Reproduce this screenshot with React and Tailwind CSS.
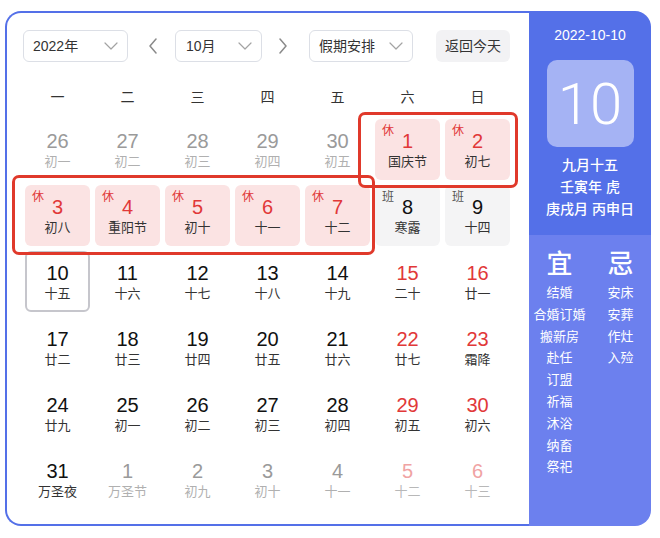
import React from "react";

const ChevDown = () => (
  <svg width="14" height="8" viewBox="0 0 14 8" fill="none" stroke="#a3a3a3" strokeWidth="1.2" strokeLinecap="round" strokeLinejoin="round">
    <polyline points="1,1 7,7 13,1" />
  </svg>
);
const ChevLeft = () => (
  <svg width="10" height="16" viewBox="0 0 10 16" fill="none" stroke="#8a8a8a" strokeWidth="1.5" strokeLinecap="round" strokeLinejoin="round">
    <polyline points="8,1 2,8 8,15" />
  </svg>
);
const ChevRight = () => (
  <svg width="10" height="16" viewBox="0 0 10 16" fill="none" stroke="#8a8a8a" strokeWidth="1.5" strokeLinecap="round" strokeLinejoin="round">
    <polyline points="2,1 8,8 2,15" />
  </svg>
);

// type: o = other month, ow = other month weekend, n = normal, w = weekend red, x = holiday (休), b = 班, t = today
const rows = [
  [["26", "初一", "o"], ["27", "初二", "o"], ["28", "初三", "o"], ["29", "初四", "o"], ["30", "初五", "o"], ["1", "国庆节", "x"], ["2", "初七", "x"]],
  [["3", "初八", "x"], ["4", "重阳节", "x"], ["5", "初十", "x"], ["6", "十一", "x"], ["7", "十二", "x"], ["8", "寒露", "b"], ["9", "十四", "b"]],
  [["10", "十五", "t"], ["11", "十六", "n"], ["12", "十七", "n"], ["13", "十八", "n"], ["14", "十九", "n"], ["15", "二十", "w"], ["16", "廿一", "w"]],
  [["17", "廿二", "n"], ["18", "廿三", "n"], ["19", "廿四", "n"], ["20", "廿五", "n"], ["21", "廿六", "n"], ["22", "廿七", "w"], ["23", "霜降", "w"]],
  [["24", "廿九", "n"], ["25", "初一", "n"], ["26", "初二", "n"], ["27", "初三", "n"], ["28", "初四", "n"], ["29", "初五", "w"], ["30", "初六", "w"]],
  [["31", "万圣夜", "n"], ["1", "万圣节", "o"], ["2", "初九", "o"], ["3", "初十", "o"], ["4", "十一", "o"], ["5", "十二", "ow"], ["6", "十三", "ow"]],
];

function Cell({ num, lunar, type }) {
  let box = "bg-white";
  let numC = "text-[#111]";
  let lunC = "text-[#333]";
  if (type === "o") { numC = "text-[#9a9a9a]"; lunC = "text-[#b0b0b0]"; }
  if (type === "ow") { numC = "text-[#f0a3a3]"; lunC = "text-[#b8b8b8]"; }
  if (type === "w") { numC = "text-[#e13838]"; }
  if (type === "x") { box = "bg-[#fbe3e3]"; numC = "text-[#e13838]"; }
  if (type === "b") { box = "bg-[#f4f4f5]"; }
  if (type === "t") { box = "bg-white border-2 border-[#c6c6cc]"; }
  return (
    <div className={`relative h-[61px] rounded-[6px] flex flex-col items-center ${type === "t" ? "pt-[8px]" : "pt-[10px]"} ${box}`}>
      {type === "x" && (
        <span className="absolute left-[7px] top-[3px] text-[12px] leading-[18px] text-[#e13838]">休</span>
      )}
      {type === "b" && (
        <span className="absolute left-[7px] top-[3px] text-[12px] leading-[18px] text-[#555]">班</span>
      )}
      <span className={`text-[20px] leading-[24px] ${numC}`}>{num}</span>
      <span className={`text-[13px] leading-[18px] ${lunC}`}>{lunar}</span>
    </div>
  );
}

function Select({ w, label, pl }) {
  return (
    <div className={`h-[32px] ${w} border border-[#dcdfe6] rounded-[6px] flex items-center justify-between ${pl} pr-[9px] bg-white`}>
      <span className="text-[14px] text-[#333]">{label}</span>
      <ChevDown />
    </div>
  );
}

export default function App() {
  const yi = ["结婚", "合婚订婚", "搬新房", "赴任", "订盟", "祈福", "沐浴", "纳畜", "祭祀"];
  const ji = ["安床", "安葬", "作灶", "入殓"];
  return (
    <div className="w-[660px] h-[538px] bg-white pt-[11px] pl-[5px] font-['Liberation_Sans','Noto_Sans_CJK_SC',sans-serif]">
      <div className="flex w-[646px] h-[515px]">
        {/* left */}
        <div className="w-[524px] h-full border-l-2 border-t-2 border-b-2 border-[#5470e8] rounded-l-[16px] pl-[16px] pt-[17px] bg-white">
          <div className="flex items-center">
            <Select w="w-[105px]" label="2022年" pl="pl-[9px]" />
            <div className="ml-[13px] w-[24px] flex justify-center"><ChevLeft /></div>
            <div className="ml-[10px]"><Select w="w-[87px]" label="10月" pl="pl-[10px]" /></div>
            <div className="ml-[9px] w-[24px] flex justify-center"><ChevRight /></div>
            <div className="ml-[14px]"><Select w="w-[104px]" label="假期安排" pl="pl-[9px]" /></div>
            <div className="ml-[23px] w-[74px] h-[32px] rounded-[6px] bg-[#f2f2f4] flex items-center justify-center text-[14px] text-[#333]">返回今天</div>
          </div>
          <div className="ml-[2px] mt-[15px] grid grid-cols-[repeat(7,65px)] gap-x-[5px] h-[40px] items-center">
            {["一", "二", "三", "四", "五", "六", "日"].map((d) => (
              <div key={d} className="text-center text-[14px] text-[#333]">{d}</div>
            ))}
          </div>
          <div className="relative ml-[2px] mt-[2px] grid grid-cols-[repeat(7,65px)] gap-x-[5px] gap-y-[5px]">
            {rows.flat().map((c, i) => (
              <Cell key={i} num={c[0]} lunar={c[1]} type={c[2]} />
            ))}
            <div className="absolute left-[333px] top-[-7px] w-[160px] h-[76px] border-[3px] border-[#e0392b] rounded-[7px]" />
            <div className="absolute left-[-13px] top-[56px] w-[363px] h-[80px] border-[3px] border-[#e0392b] rounded-[7px]" />
          </div>
        </div>
        {/* right */}
        <div className="w-[122px] h-full rounded-r-[16px] overflow-hidden flex flex-col text-white">
          <div className="h-[224px] bg-[#5470e8] flex flex-col items-center pt-[14px]">
            <div className="text-[14px] leading-[20px]">2022-10-10</div>
            <div className="mt-[15px] w-[87px] h-[87px] rounded-[10px] bg-[#a5b3f4] flex items-center justify-center">
              <span className="font-['Roboto',sans-serif] font-light text-[58px] leading-none">10</span>
            </div>
            <div className="mt-[7px] flex flex-col items-center text-[14px] leading-[22px] font-medium">
              <div>九月十五</div>
              <div>壬寅年 虎</div>
              <div>庚戌月 丙申日</div>
            </div>
          </div>
          <div className="flex-1 bg-[#6c80ee] grid grid-cols-2 pt-[13px]">
            <div className="flex flex-col items-center">
              <div className="text-[26px] leading-[32px] font-medium">宜</div>
              <div className="mt-[2px] flex flex-col items-center text-[13px] leading-[21.8px]">
                {yi.map((t) => <div key={t}>{t}</div>)}
              </div>
            </div>
            <div className="flex flex-col items-center">
              <div className="text-[26px] leading-[32px] font-medium">忌</div>
              <div className="mt-[2px] flex flex-col items-center text-[13px] leading-[21.8px]">
                {ji.map((t) => <div key={t}>{t}</div>)}
              </div>
            </div>
          </div>
        </div>
      </div>
    </div>
  );
}
